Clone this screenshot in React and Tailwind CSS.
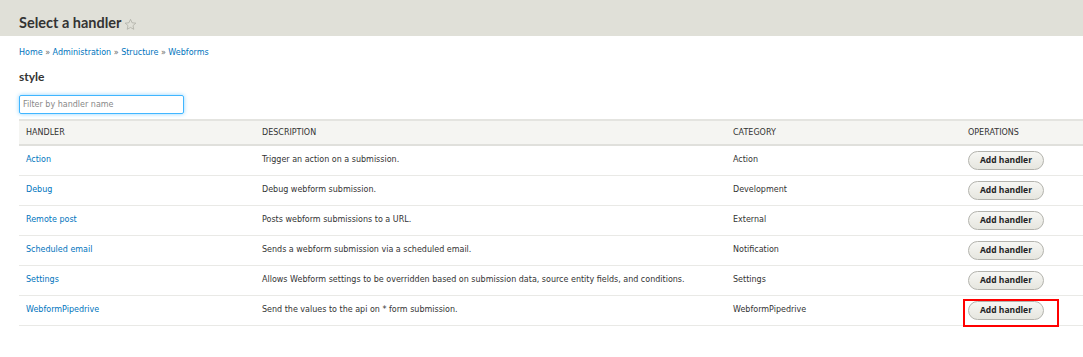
import React from "react";

const rows = [
  ["Action", "Trigger an action on a submission.", "Action"],
  ["Debug", "Debug webform submission.", "Development"],
  ["Remote post", "Posts webform submissions to a URL.", "External"],
  ["Scheduled email", "Sends a webform submission via a scheduled email.", "Notification"],
  [
    "Settings",
    "Allows Webform settings to be overridden based on submission data, source entity fields, and conditions.",
    "Settings",
  ],
  ["WebformPipedrive", "Send the values to the api on * form submission.", "WebformPipedrive"],
];

const Star = () => (
  <svg width="13" height="13" viewBox="0 0 24 24" className="ml-[2px] mt-[2px]">
    <path
      d="M12 2.5l2.9 6.3 6.9.7-5.2 4.6 1.5 6.8L12 17.4l-6.1 3.5 1.5-6.8-5.2-4.6 6.9-.7z"
      fill="none"
      stroke="#a8a89f"
      strokeWidth="1.3"
      strokeLinejoin="round"
    />
  </svg>
);

const App = () => {
  return (
    <div className="w-[1083px] h-[357px] bg-white overflow-hidden text-[#333] font-['DejaVu_Sans',sans-serif]">
      <div className="h-[36px] bg-[#e0e0d8] flex items-center pl-[19px] pt-[10px]">
        <h1 className="text-[14.5px] font-bold text-[#333] font-['Lato',sans-serif]">Select a handler</h1>
        <Star />
      </div>

      <div className="px-[19px]">
        <div className="mt-[11px] text-[8px] text-[#0074bd]">
          Home <span className="text-[#666]">»</span> Administration <span className="text-[#666]">»</span> Structure{" "}
          <span className="text-[#666]">»</span> Webforms
        </div>
        <h2 className="mt-[9px] text-[12px] font-bold font-['Lato',sans-serif]">style</h2>
        <div className="mt-[4px]">
          <input
            placeholder="Filter by handler name"
            className="w-[165px] h-[19px] px-[3px] text-[8px] border border-[#40b6ff] rounded-[2px] shadow-[0_0_4px_#8fd3ff] outline-none placeholder:text-[#888]"
          />
        </div>
      </div>

      <div className="ml-[19px] mt-[5px] text-[8px]">
        <div className="grid grid-cols-[236px_471px_235px_1fr] h-[27px] items-center bg-[#f5f5f2] border-t-[2px] border-t-[#e4e4e0] border-b-[2px] border-b-[#e0e0dc] text-[#333] uppercase">
          <div className="pl-[7px]">Handler</div>
          <div className="pl-[7px]">Description</div>
          <div className="pl-[7px]">Category</div>
          <div className="pl-[7px]">Operations</div>
        </div>
        {rows.map(([name, desc, cat], i) => (
          <div
            key={name}
            className="grid grid-cols-[236px_471px_235px_1fr] h-[30px] items-center border-b border-[#e9e9e6]"
          >
            <div className="pl-[7px] text-[#0074bd] -mt-[1px]">{name}</div>
            <div className="pl-[7px] -mt-[1px]">{desc}</div>
            <div className="pl-[7px] -mt-[1px]">{cat}</div>
            <div className="pl-[7px] relative">
              <button className="w-[76px] h-[19px] rounded-full border border-[#b3b3ad] bg-gradient-to-b from-[#f6f6f3] to-[#e6e6df] text-[8.5px] font-bold text-[#222] font-['Open_Sans',sans-serif]">
                Add handler
              </button>
              {i === rows.length - 1 && (
                <div className="absolute left-[2px] top-[-2px] w-[96px] h-[28px] border-2 border-[#ff0000]" />
              )}
            </div>
          </div>
        ))}
      </div>
    </div>
  );
};

export default App;
